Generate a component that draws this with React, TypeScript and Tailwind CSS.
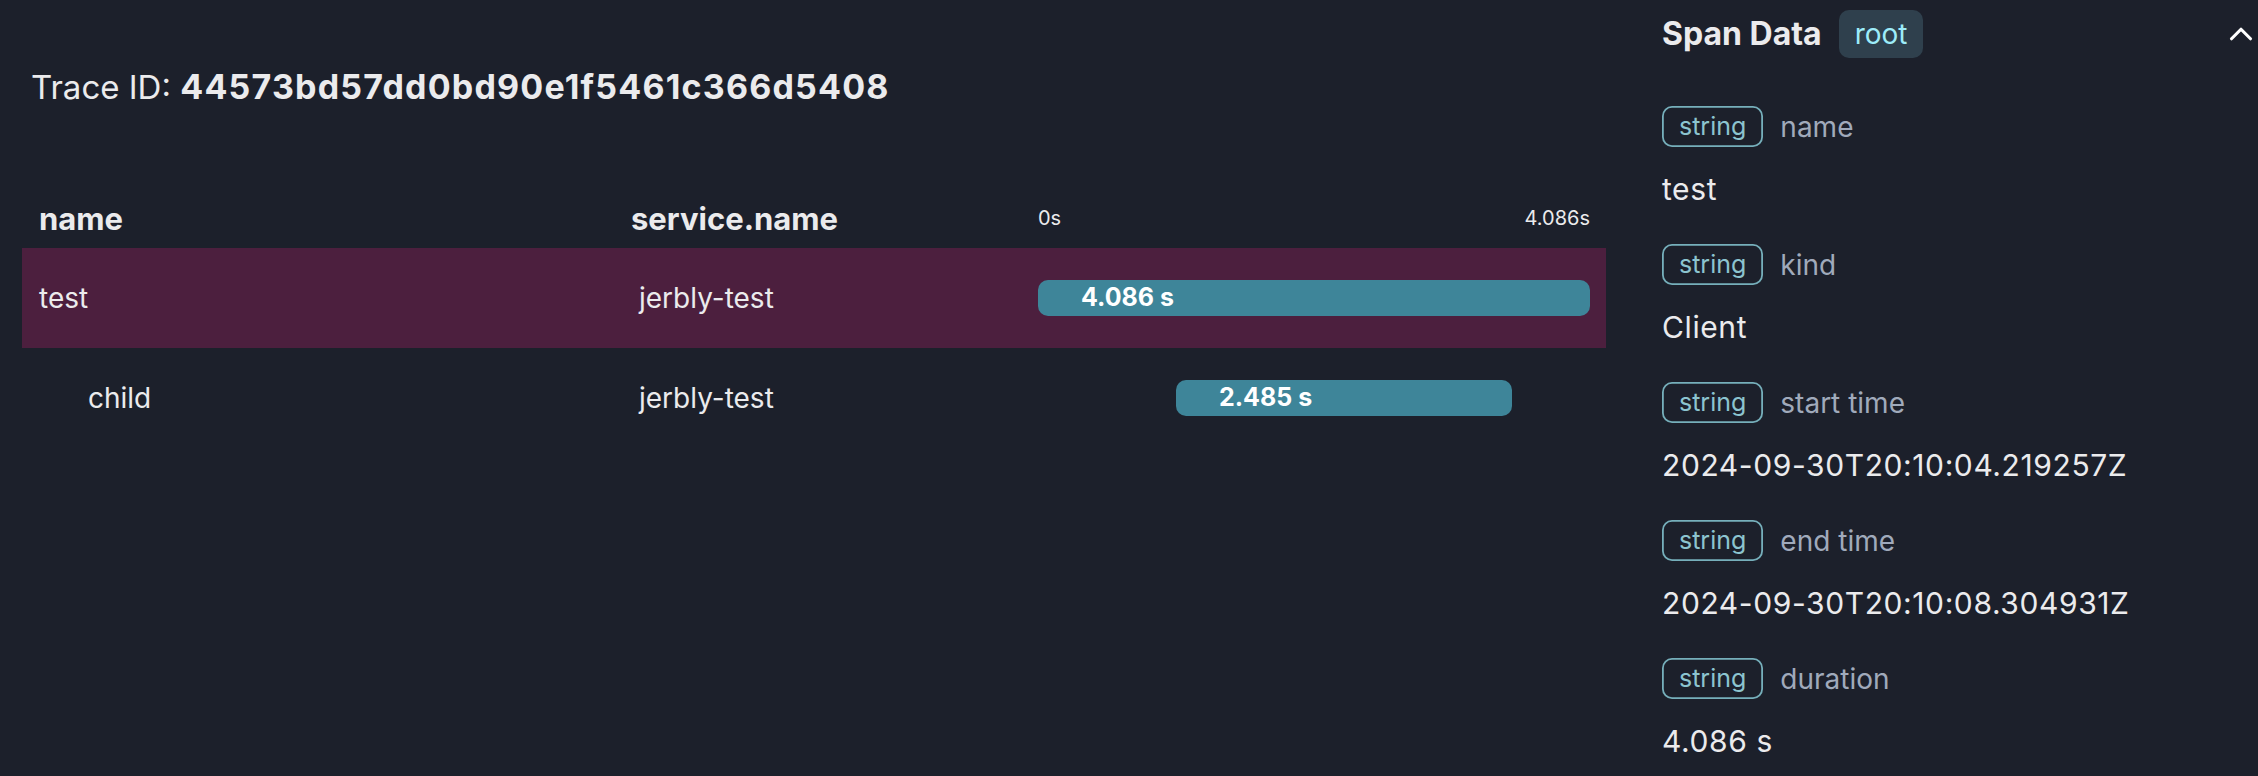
import { ChevronUp } from 'lucide-react';

const spans = [
  { name: 'test', service: 'jerbly-test', start: 0, duration: 4.086, depth: 0, selected: true },
  { name: 'child', service: 'jerbly-test', start: 1.0215, duration: 2.485, depth: 1, selected: false },
];

const total = 4.086;

const attributes = [
  { type: 'string', key: 'name', value: 'test' },
  { type: 'string', key: 'kind', value: 'Client' },
  { type: 'string', key: 'start time', value: '2024-09-30T20:10:04.219257Z' },
  { type: 'string', key: 'end time', value: '2024-09-30T20:10:08.304931Z' },
  { type: 'string', key: 'duration', value: '4.086 s' },
];

export default function App() {
  return (
    <div
      className="flex w-full h-[776px] overflow-hidden bg-[#1c202b] text-[#ebebed]"
      style={{ fontFamily: 'Inter, "Noto Sans", sans-serif' }}
    >
      {/* Trace waterfall */}
      <div className="w-[1606px] shrink-0 pl-[22px]">
        <h1 className="mt-[67px] pl-[9px] text-[33px] leading-[40px]">
          Trace ID:{' '}
          <span className="text-[34px] font-bold tracking-[0.035em]">44573bd57dd0bd90e1f5461c366d5408</span>
        </h1>

        <div className="mt-[93px] flex h-[48px] items-start">
          <div className="w-[592px] pl-[17px] text-[31px] leading-[38px] font-bold">name</div>
          <div className="w-[424px] pl-[17px] text-[31px] leading-[38px] font-bold">service.name</div>
          <div className="w-[552px] pt-[6px] flex justify-between text-[20px] leading-[24px]">
            <span>0s</span>
            <span>4.086s</span>
          </div>
        </div>

        {spans.map((s) => (
          <div
            key={s.name}
            className={`flex h-[100px] items-center ${s.selected ? 'bg-[#4c1f3e]' : ''}`}
          >
            <div className="w-[592px] pl-[17px] text-[28px] leading-[36px]">
              <span className={s.depth > 0 ? 'pl-[49px]' : ''}>{s.name}</span>
            </div>
            <div className="w-[424px] pl-[25px] text-[28px] leading-[36px]">{s.service}</div>
            <div className="w-[552px] h-[36px] relative">
              <div
                className="absolute top-0 h-[36px] rounded-[10px] bg-[#3e8599] flex items-center pl-[43px] text-[25px] font-bold text-white"
                style={{
                  left: `${(s.start / total) * 100}%`,
                  width: `${(s.duration / total) * 100}%`,
                }}
              >
                {s.duration.toFixed(3)} s
              </div>
            </div>
          </div>
        ))}
      </div>

      {/* Span details */}
      <div className="flex-1 pl-[56px] pr-[14px]">
        <div className="mt-[10px] flex h-[48px] items-center justify-between">
          <div className="flex items-center gap-[17px]">
            <h2 className="text-[32px] leading-[40px] font-bold">Span Data</h2>
            <span className="h-[48px] px-[16px] flex items-center rounded-[10px] bg-[#2f404d] text-[#9decf9] text-[28px]">
              root
            </span>
          </div>
          <ChevronUp size={38} strokeWidth={2} className="mr-[-16px] text-white" />
        </div>

        <div className="mt-[48px] flex flex-col gap-[37px]">
          {attributes.map((a) => (
            <div key={a.key} className="flex flex-col">
              <div className="flex h-[41px] items-center gap-[17px]">
                <span className="h-[41px] px-[17px] flex items-center rounded-[10px] shadow-[inset_0_0_0_1.8px_rgba(157,236,249,0.7)] text-[#8cc4cf] text-[25px]">
                  {a.type}
                </span>
                <span className="text-[28px] text-[#a0aabb]">{a.key}</span>
              </div>
              <div className="mt-[24px] text-[30px] leading-[36px] tracking-[0.02em]">{a.value}</div>
            </div>
          ))}
        </div>
      </div>
    </div>
  );
}
